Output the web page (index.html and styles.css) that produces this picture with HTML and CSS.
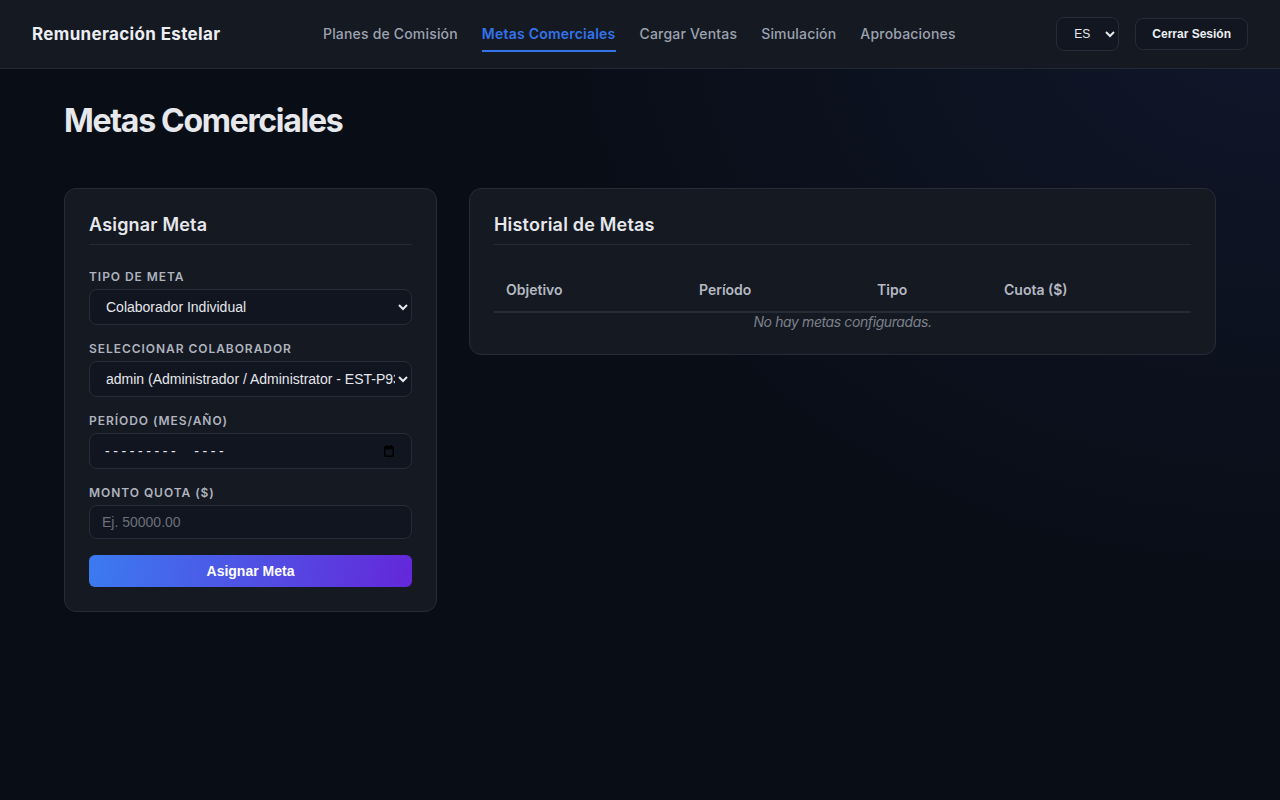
FILE: index.html
```html
<!DOCTYPE html>
<html lang="es">
<head>
  <meta charset="UTF-8" />
  <meta name="viewport" content="width=device-width, initial-scale=1.0"/>
  <title>Metas Comerciales - Remuneración Estelar</title>
  <link rel="stylesheet" href="styles.css">
</head>
<body>
  <header class="topbar">
    <div class="brand">Remuneración Estelar</div>
    <nav class="nav">
      <a href="#" class="nav-link">Planes de Comisión</a>
      <a href="#" class="nav-link active">Metas Comerciales</a>
      <a href="#" class="nav-link">Cargar Ventas</a>
      <a href="#" class="nav-link">Simulación</a>
      <a href="#" class="nav-link">Aprobaciones</a>
    </nav>
    <div class="actions">
      <select class="lang-select">
        <option>ES</option>
        <option>EN</option>
      </select>
      <button class="logout-button">Cerrar Sesión</button>
    </div>
  </header>

  <main class="page">
    <h1 class="page-title">Metas Comerciales</h1>

    <div class="layout">
      <section class="card form-card">
        <h2 class="card-title">Asignar Meta</h2>
        <form id="goalForm">
          <div class="form-group">
            <label for="goalType">Tipo de Meta</label>
            <select id="goalType">
              <option>Colaborador Individual</option>
              <option>Equipo</option>
            </select>
          </div>
          <div class="form-group">
            <label for="collaborator">Seleccionar Colaborador</label>
            <select id="collaborator">
              <option>admin (Administrador / Administrator - EST-P93)</option>
            </select>
          </div>
          <div class="form-group">
            <label for="period">Período (Mes/Año)</label>
            <div class="month-field">
              <input type="text" id="period" class="month-input" placeholder="---------  ----" onfocus="this.type='month'" />
              <svg class="calendar-icon" width="10" height="12" viewBox="0 0 10 12">
                <rect x="0.75" y="1.75" width="8.5" height="9.5" rx="1" fill="none" stroke="#000" stroke-width="1.5"/>
                <rect x="0.75" y="1.75" width="8.5" height="2.5" fill="#000"/>
                <rect x="2" y="0" width="1.5" height="2" fill="#000"/>
                <rect x="6.5" y="0" width="1.5" height="2" fill="#000"/>
              </svg>
            </div>
          </div>
          <div class="form-group">
            <label for="quota">Monto Quota ($)</label>
            <input type="number" id="quota" placeholder="Ej. 50000.00" />
          </div>
          <button type="submit" class="primary-button">Asignar Meta</button>
        </form>
      </section>

      <section class="card history-card">
        <h2 class="card-title">Historial de Metas</h2>
        <table class="goals-table">
          <thead>
            <tr>
              <th class="col-target">Objetivo</th>
              <th class="col-period">Período</th>
              <th class="col-type">Tipo</th>
              <th>Cuota ($)</th>
            </tr>
          </thead>
          <tbody>
            <tr>
              <td colspan="4" class="empty">No hay metas configuradas.</td>
            </tr>
          </tbody>
        </table>
      </section>
    </div>
  </main>
</body>
</html>
```

FILE: styles.css
```css
* {
  box-sizing: border-box;
}
html, body {
  margin: 0;
  min-height: 100%;
}
body {
  font-family: Inter, "Noto Sans", sans-serif;
  color: #e5e7eb;
  background-color: #090d16;
  background-image: radial-gradient(ellipse 1000px 800px at 100% 0%, rgba(28, 38, 74, 0.4), rgba(9, 13, 22, 0) 75%);
  min-height: 800px;
}
.topbar {
  height: 69px;
  display: flex;
  align-items: center;
  padding: 0 32px;
  background-color: #151922;
  border-bottom: 1px solid #232836;
}
.brand {
  font-size: 17px;
  font-weight: 700;
  color: #eceef2;
  letter-spacing: 0.35px;
  width: 291px;
}
.nav {
  display: flex;
  gap: 24px;
  flex: 1;
}
.nav-link {
  color: #9ca3af;
  font-size: 14px;
  font-weight: 500;
  text-decoration: none;
  letter-spacing: 0.18px;
  padding: 8px 0;
  border-bottom: 2px solid transparent;
  margin-top: 1px;
}
.nav-link.active {
  color: #3374ea;
  font-weight: 600;
  letter-spacing: 0.22px;
  border-bottom-color: #3374ea;
}
.actions {
  display: flex;
  align-items: center;
  gap: 16px;
}
.lang-select {
  height: 34px;
  width: 63px;
  padding: 0 4px 0 13px;
  background-color: #121620;
  color: #e5e7eb;
  border: 1px solid #262b38;
  border-radius: 8px;
  font-family: "Liberation Sans", Arial, sans-serif;
  font-size: 12px;
}
.logout-button {
  height: 32px;
  padding: 0 16px;
  background-color: #121620;
  color: #eceef2;
  border: 1px solid #262b38;
  border-radius: 8px;
  font-family: "Liberation Sans", Arial, sans-serif;
  font-size: 12px;
  font-weight: 700;
}
.page {
  padding: 0 64px;
}
.page-title {
  margin: 0;
  padding-top: 34px;
  font-size: 32px;
  font-weight: 700;
  letter-spacing: -1.3px;
  color: #e6e8ec;
  line-height: 36px;
}
.layout {
  display: flex;
  align-items: flex-start;
  gap: 32px;
  margin-top: 49px;
}
.card {
  background-color: #151922;
  border: 1px solid #262b38;
  border-radius: 12px;
  padding: 24px;
}
.form-card {
  width: 373px;
}
.history-card {
  flex: 1;
}
.card-title {
  margin: 0 0 24px;
  font-size: 18px;
  font-weight: 600;
  letter-spacing: 0.2px;
  color: #e6e8ec;
  line-height: 22px;
  padding-top: 1px;
  padding-bottom: 8px;
  border-bottom: 1px solid #262b38;
}
.form-group {
  margin-bottom: 16px;
}
.form-group label {
  display: block;
  font-size: 12px;
  font-weight: 600;
  text-transform: uppercase;
  letter-spacing: 0.95px;
  color: #aeb3bd;
  margin-bottom: 5px;
  line-height: 15px;
}
.form-group select,
.form-group input {
  display: block;
  width: 100%;
  height: 36px;
  padding: 0 12px;
  background-color: #111520;
  color: #e5e7eb;
  border: 1px solid #262b38;
  border-radius: 8px;
  font-family: "Liberation Sans", Arial, sans-serif;
  font-size: 14px;
  color-scheme: light;
}
.form-group select {
  padding: 0 0 0 12px;
}
.form-group input[type="number"] {
  height: 34px;
}
.form-group input::placeholder {
  color: #6b7079;
}
.month-field {
  position: relative;
}
.form-group .month-input {
  padding-left: 15px;
  letter-spacing: 3.6px;
}
.form-group .month-input::placeholder {
  color: #e5e7eb;
}
.calendar-icon {
  position: absolute;
  right: 18px;
  top: 12px;
  pointer-events: none;
}
.primary-button {
  width: 100%;
  height: 32px;
  border: none;
  border-radius: 6px;
  background: linear-gradient(100deg, #3b7bf0, #6427d9);
  color: white;
  font-family: "Liberation Sans", Arial, sans-serif;
  font-size: 14px;
  font-weight: 700;
  cursor: pointer;
}
.goals-table {
  width: 100%;
  border-collapse: collapse;
  margin-top: 24px;
}
.goals-table th {
  text-align: left;
  font-size: 14px;
  font-weight: 600;
  color: #b4b8c1;
  padding: 12px 12px 13px;
  border-bottom: 2px solid #262b38;
}
.col-target {
  width: 193px;
}
.col-period {
  width: 178px;
}
.col-type {
  width: 127px;
}
.goals-table .empty {
  text-align: center;
  font-size: 14px;
  font-style: italic;
  letter-spacing: -0.4px;
  color: #7c818b;
  padding: 0;
}
```
